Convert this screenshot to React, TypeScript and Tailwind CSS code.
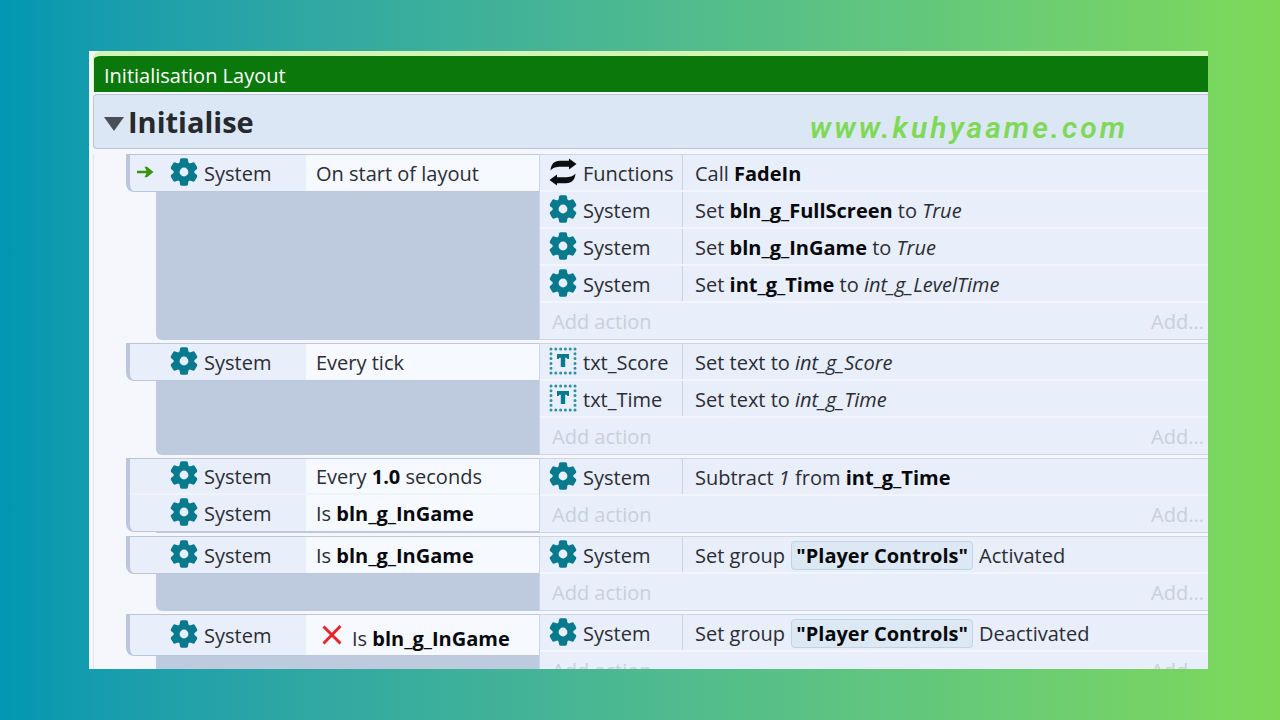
import React from "react";

type Kind = "system" | "functions" | "text";

interface Item {
  kind: Kind;
  object: string;
  body: React.ReactNode;
  inverted?: boolean;
}

interface SheetEvent {
  trigger?: boolean;
  conditions: Item[];
  actions: Item[];
}

const system = (body: React.ReactNode, inverted = false): Item => ({
  kind: "system",
  object: "System",
  body,
  inverted,
});

const Name: React.FC<{ children: React.ReactNode }> = ({ children }) => (
  <b className="text-[#08090c]">{children}</b>
);

const GroupName: React.FC<{ name: string }> = ({ name }) => (
  <b className="mx-px rounded-sm border border-[#c3d5e3] bg-[#dce8f4] px-1 text-[#08090c]">"{name}"</b>
);

const events: SheetEvent[] = [
  {
    trigger: true,
    conditions: [system("On start of layout")],
    actions: [
      { kind: "functions", object: "Functions", body: <>Call <Name>FadeIn</Name></> },
      system(<>Set <Name>bln_g_FullScreen</Name> to <i>True</i></>),
      system(<>Set <Name>bln_g_InGame</Name> to <i>True</i></>),
      system(<>Set <Name>int_g_Time</Name> to <i>int_g_LevelTime</i></>),
    ],
  },
  {
    conditions: [system("Every tick")],
    actions: [
      { kind: "text", object: "txt_Score", body: <>Set text to <i>int_g_Score</i></> },
      { kind: "text", object: "txt_Time", body: <>Set text to <i>int_g_Time</i></> },
    ],
  },
  {
    conditions: [system(<>Every <Name>1.0</Name> seconds</>), system(<>Is <Name>bln_g_InGame</Name></>)],
    actions: [system(<>Subtract <i>1</i> from <Name>int_g_Time</Name></>)],
  },
  {
    conditions: [system(<>Is <Name>bln_g_InGame</Name></>)],
    actions: [system(<>Set group <GroupName name="Player Controls" /> Activated</>)],
  },
  {
    conditions: [system(<>Is <Name>bln_g_InGame</Name></>, true)],
    actions: [system(<>Set group <GroupName name="Player Controls" /> Deactivated</>)],
  },
];

const GearIcon = () => (
  <svg viewBox="-14 -14 28 28" className="h-7 w-7 shrink-0" aria-hidden="true">
    <circle r="7.4" fill="none" stroke="#087a8e" strokeWidth="6" />
    {[0, 60, 120, 180, 240, 300].map((angle) => (
      <path
        key={angle}
        d="M-4.6 -8.5 L-3.9 -12.4 Q-3.6 -13.8 -2.2 -13.8 H2.2 Q3.6 -13.8 3.9 -12.4 L4.6 -8.5 Z"
        fill="#087a8e"
        transform={`rotate(${angle})`}
      />
    ))}
  </svg>
);

const FunctionsIcon = () => (
  <svg viewBox="0 0 28 28" className="h-7 w-7 shrink-0" fill="#0b0c10" aria-hidden="true">
    <path d="M1.5 12.5 C2 6.5 5 2.8 11 2.8 H20 V0.4 L27.5 6 L20 11.4 V8.8 H12 C7 8.8 4 9.6 1.5 12.5 Z" />
    <path d="M26.5 15.5 C26 21.5 23 25.2 17 25.2 H8 V27.6 L0.5 22 L8 16.6 V19.2 H16 C21 19.2 24 18.4 26.5 15.5 Z" />
  </svg>
);

const TextIcon = () => (
  <svg viewBox="0 0 28 28" className="h-7 w-7 shrink-0" aria-hidden="true">
    <rect
      x="2"
      y="2"
      width="24"
      height="24"
      fill="none"
      stroke="#2f8fa3"
      strokeWidth="3"
      strokeLinecap="round"
      strokeDasharray="0.01 4.79"
    />
    <path d="M8 7 H20 V12 H18.5 L17.5 10.8 H16.2 V20 H11.8 V10.8 H10.5 L9.5 12 H8 Z" fill="#087a8e" />
  </svg>
);

const TriggerArrow = () => (
  <svg viewBox="0 0 18 14" className="h-3.5 w-[18px]" aria-hidden="true">
    <path d="M1 5.7 H10.5 L8.5 1.8 H11 L17.5 7 L11 12.2 H8.5 L10.5 8.3 H1 Z" fill="#3a9410" />
  </svg>
);

const CrossIcon = () => (
  <svg viewBox="0 0 20 20" className="h-5 w-5" aria-hidden="true">
    <path d="M1.5 1.5 L18.5 18.5 M18.5 1 L1.5 18.5" fill="none" stroke="#e8252c" strokeWidth="3" />
  </svg>
);

const icons: Record<Kind, React.FC> = {
  system: GearIcon,
  functions: FunctionsIcon,
  text: TextIcon,
};

const ObjectName: React.FC<{ item: Item }> = ({ item }) => {
  const Icon = icons[item.kind];
  return (
    <span className="flex items-center gap-1.5">
      <span className="pb-0.5">
        <Icon />
      </span>
      <span className="pt-0.5">{item.object}</span>
    </span>
  );
};

const EventBlock: React.FC<{ event: SheetEvent }> = ({ event }) => (
  <li className="grid grid-cols-[413px_1fr]">
    {/* conditions */}
    <div className="flex flex-col">
      <div className="divide-y-2 divide-[#eff4fc] overflow-hidden rounded-bl-lg border-y border-l-4 border-[#bdc7dc] bg-[#e8eefa]">
        {event.conditions.map((item, i) => (
          <div
            key={i}
            className={`grid grid-cols-[40px_136px_1fr] ${item.inverted ? "h-10" : "h-9"}`}
          >
            <span className="flex items-center pb-0.5 pl-1.5">{event.trigger && <TriggerArrow />}</span>
            <ObjectName item={item} />
            <span className="flex items-center bg-[#f6f9ff] pl-2.5">
              {item.inverted && (
                <span className="mr-2.5 ml-1.5">
                  <CrossIcon />
                </span>
              )}
              <span className={item.inverted ? "pt-2" : "pt-0.5"}>{item.body}</span>
            </span>
          </div>
        ))}
      </div>
      <div className="ml-[30px] flex-1 rounded-bl-md bg-[#becbdf]" />
    </div>

    {/* actions */}
    <div className="border-y border-l border-[#ccd5e6] bg-[#e8eefa]">
      {event.actions.map((item, i) => (
        <div key={i} className="grid h-[37px] grid-cols-[143px_1fr] border-b-2 border-[#f0f5fe]">
          <span className="flex border-r border-[#ccd5e4] pl-[9px]">
            <ObjectName item={item} />
          </span>
          <span className="flex items-center pl-3">
            <span className="pt-0.5">{item.body}</span>
          </span>
        </div>
      ))}
      <div className="flex h-9 items-center justify-between pt-0.5 pr-1 pl-3 text-[#c9d0dd]">
        <button type="button">Add action</button>
        <button type="button">Add...</button>
      </div>
    </div>
  </li>
);

const App: React.FC = () => (
  <main className="flex h-screen bg-gradient-to-r from-[#0097b2] to-[#7ed957] pt-[51px] pr-[72px] pb-[51px] pl-[89px] font-['Open_Sans',sans-serif] text-xl leading-7 text-[#2b2d35]">
    <section className="flex-1 overflow-hidden bg-[#f5f7fc]">
      <h1 className="ml-1 flex h-[41px] items-center rounded-tl-lg border-t-[5px] border-l border-[#d3f5b4] bg-[#0a780a] pt-1 pl-2.5 text-white">
        Initialisation Layout
      </h1>

      {/* group header */}
      <header className="mt-0.5 ml-1 flex h-[55px] items-center justify-between rounded-l-sm border border-r-0 border-[#b9c5d9] bg-[#dbe7f4] pr-20 pl-2.5">
        <button type="button" className="flex items-center gap-1 text-[29px] font-bold text-[#26292e]">
          <svg viewBox="0 0 20 16" className="mt-1 h-4 w-5" aria-hidden="true">
            <path d="M0 1 H20 L10 15 Z" fill="#4a4f57" />
          </svg>
          Initialise
        </button>
        <a
          href="https://www.kuhyaame.com"
          className="pt-3 font-['Roboto',sans-serif] text-[30px] font-semibold tracking-widest text-[#7ed957] italic"
        >
          www.kuhyaame.com
        </a>
      </header>

      <ul className="mt-[5px] ml-1 flex flex-col gap-[3px] border-l border-[#dfe5f0] pl-8">
        {events.map((event, i) => (
          <EventBlock key={i} event={event} />
        ))}
      </ul>
    </section>
  </main>
);

export default App;
